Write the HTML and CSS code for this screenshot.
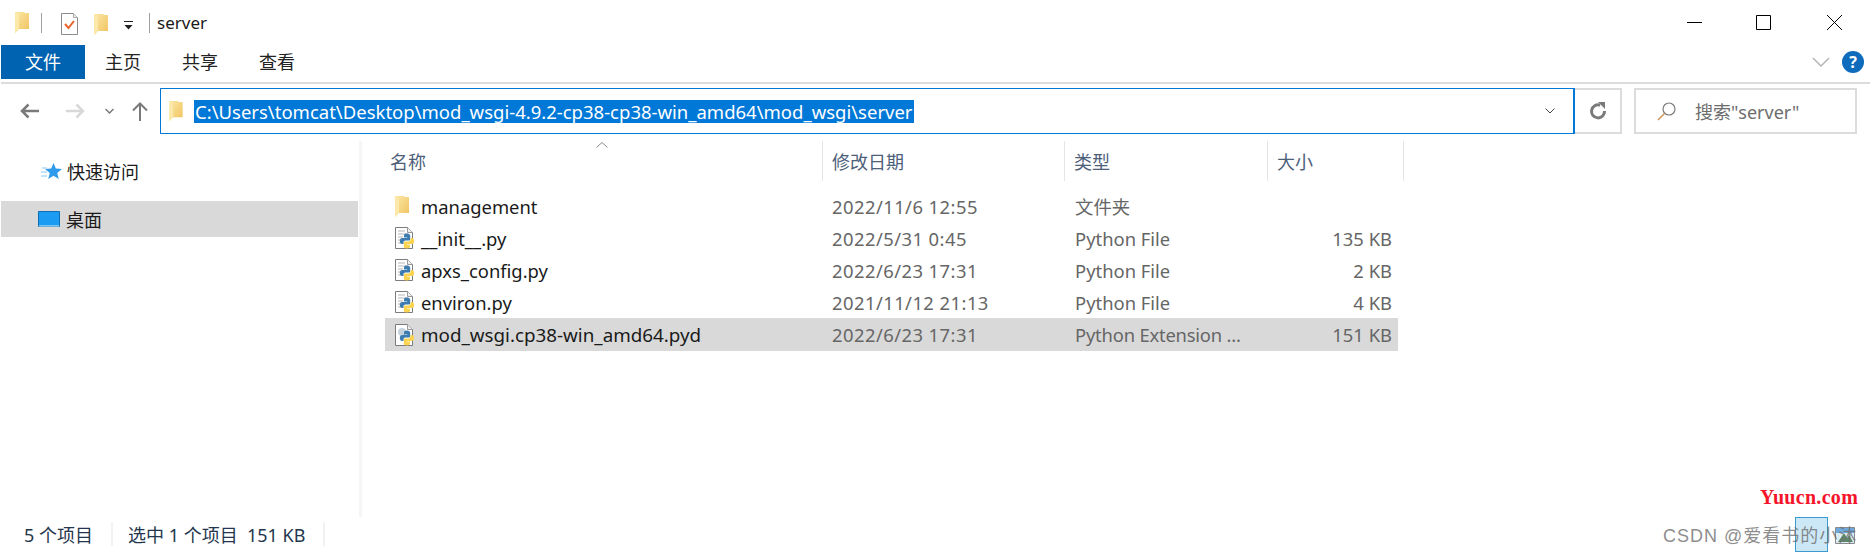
FILE: index.html
```html
<!DOCTYPE html>
<html lang="en">
<head>
    <meta charset="UTF-8">
    <title>server</title>
    <link rel="stylesheet" href="styles.css">
</head>
<body>
    <!-- Shared icons -->
    <svg class="defs" width="0" height="0">
        <defs>
            <linearGradient id="folder-fill" x1="0" y1="0" x2="1" y2="1">
                <stop offset="0" stop-color="#fbe8a8"/>
                <stop offset="1" stop-color="#f0c25c"/>
            </linearGradient>
            <symbol id="folder" viewBox="0 0 14 21">
                <path d="M0 0h9l1 1h4v16H4L0 21z" fill="url(#folder-fill)"/>
                <path d="M0 0l4 2v15L0 21z" fill="#fce9a9"/>
            </symbol>
            <symbol id="snake" viewBox="0 0 16 16">
                <path d="M8 .5C5.4.5 5 1.7 5 2.8v1.7h3.2V5H3.1C1.8 5 .8 6.2.8 8s1 3.1 2.3 3.1h1.4V9.4c0-1 .8-1.9 1.9-1.9h3.2c.9 0 1.6-.7 1.6-1.6V2.8C11.200 1.500 10.200.5 8 .5z" fill="#3d7cb0"/>
                <path d="M8 .5C5.4.5 5 1.700 5 2.800v1.700h3.200V5H3.100C1.800 5 .8 6.200.8 8s1 3.100 2.300 3.100h1.400V9.400c0-1 .8-1.900 1.900-1.900h3.200c.9 0 1.600-.7 1.600-1.600V2.800C11.200 1.500 10.200.5 8 .5z" fill="#fbd34e" transform="rotate(180 8 8)"/>
            </symbol>
            <symbol id="py-file" viewBox="0 0 20 22">
                <path d="M.5.5h12l5 5v16H.5z" fill="#fff" stroke="#7b7b7b"/>
                <path d="M12.500.5v5h5" fill="#eee" stroke="#9a9a9a"/>
                <path d="M3 4h7M3 7h10M3 10h5M3 13h3M3 16h3" stroke="#b5b5b5"/>
                <use href="#snake" x="4" y="6" width="16" height="16"/>
            </symbol>
            <symbol id="pyd-file" viewBox="0 0 20 22">
                <path d="M.5.5h12l5 5v16H.5z" fill="#fff" stroke="#7b7b7b"/>
                <path d="M12.500.5v5h5" fill="#eee" stroke="#9a9a9a"/>
                <circle cx="7" cy="8" r="4" fill="#c5d3dd"/>
                <use href="#snake" x="4" y="6" width="16" height="16"/>
            </symbol>
        </defs>
    </svg>

    <div class="window">
        <!-- Title bar -->
        <div class="titlebar">
            <svg class="qa-folder"><use href="#folder"/></svg>
            <span class="qa-sep"></span>
            <svg class="qa-note" viewBox="0 0 17 22">
                <path d="M.5.500h12l4 4v17H.5z" fill="#fff" stroke="#8c8c8c"/>
                <path d="M12.500.5v4h4" fill="#eee" stroke="#aaa"/>
                <path d="M4 11l3.500 4L13 8" fill="none" stroke="#e8622a" stroke-width="2"/>
            </svg>
            <svg class="qa-folder qa-folder-two"><use href="#folder"/></svg>
            <svg class="qa-drop" viewBox="0 0 9 9">
                <path d="M0 .5h9" stroke="#222"/>
                <path d="M.5 4h8L4.500 8.500z" fill="#222"/>
            </svg>
            <span class="qa-sep qa-sep-two"></span>
            <span class="title">server</span>
            <div class="win-controls">
                <svg class="win-min" width="15" height="15" viewBox="0 0 15 15"><path d="M0 7.500h15" stroke="#000"/></svg>
                <svg class="win-max" width="15" height="15" viewBox="0 0 15 15"><path d="M.5.500h14v14H.5z" fill="none" stroke="#000"/></svg>
                <svg width="15" height="15" viewBox="0 0 15 15"><path d="M0 0l15 15M15 0L0 15" stroke="#000"/></svg>
            </div>
        </div>

        <!-- Ribbon tabs -->
        <div class="tabs">
            <div class="tab-file"><span>文件</span></div>
            <div class="tab">主页</div>
            <div class="tab">共享</div>
            <div class="tab">查看</div>
            <div class="ribbon-right">
                <svg width="18" height="10" viewBox="0 0 18 10"><path d="M1 1l8 8 8-8" fill="none" stroke="#b5b5b5" stroke-width="1.500"/></svg>
                <div class="help">?</div>
            </div>
        </div>
        <div class="ribbon-line"></div>

        <!-- Address bar -->
        <div class="addressbar">
            <div class="nav">
                <svg class="nav-back" width="19" height="16" viewBox="0 0 19 16"><path d="M19 8H2M8.500 1.500L2 8l6.500 6.500" fill="none" stroke="#7a7a7a" stroke-width="2.500"/></svg>
                <svg class="nav-forward" width="19" height="16" viewBox="0 0 19 16"><path d="M0 8h17M10.500 1.500L17 8l-6.500 6.500" fill="none" stroke="#d8d8d8" stroke-width="2.500"/></svg>
                <svg class="nav-recent" width="9" height="6" viewBox="0 0 9 6"><path d="M.5 1l4 4 4-4" fill="none" stroke="#7a7a7a" stroke-width="1.500"/></svg>
                <svg class="nav-up" width="16" height="19" viewBox="0 0 16 19"><path d="M8 19V2M1 8.500L8 1.500l7 7" fill="none" stroke="#7a7a7a" stroke-width="2"/></svg>
            </div>
            <div class="address">
                <svg class="address-folder"><use href="#folder"/></svg>
                <span class="address-path">C:\Users\tomcat\Desktop\mod_wsgi-4.9.2-cp38-cp38-win_amd64\mod_wsgi\server</span>
                <svg class="address-drop" width="10" height="6" viewBox="0 0 10 6"><path d="M.5.500L5 5 9.500.5" fill="none" stroke="#444"/></svg>
            </div>
            <div class="refresh">
                <svg width="18" height="18" viewBox="0 0 18 18"><path d="M11 3.200A6.500 6.500 0 1 0 15.500 9" fill="none" stroke="#7a7a7a" stroke-width="3"/><path d="M9 0l7 0v7z" fill="#7a7a7a"/></svg>
            </div>
            <div class="search">
                <svg width="19" height="19" viewBox="0 0 19 19"><circle cx="12" cy="7" r="6" fill="none" stroke="#7a7a7a" stroke-width="1.200"/><path d="M7.500 11.500L1 18" stroke="#c9925a" stroke-width="1.400"/></svg>
                <span>搜索"server"</span>
            </div>
        </div>

        <div class="main">
            <!-- Navigation pane -->
            <div class="sidebar">
                <div class="side-item side-quick">
                    <svg class="side-star" width="21" height="18" viewBox="0 0 21 18">
                        <path d="M12.500 0l2.300 5.600 6.200.4-4.800 3.900 1.600 6.100-5.300-3.300L7.200 16l1.600-6.100L4 6l6.200-.4z" fill="#2f9bec"/>
                        <path d="M1 5h5M0 9h6M0 13h6" stroke="#8cc8f3"/>
                    </svg>
                    <span>快速访问</span>
                </div>
                <div class="side-item side-selected">
                    <svg class="side-desk" width="22" height="16" viewBox="0 0 22 16">
                        <path d="M.5.500h21v15H.5z" fill="#1b9cf2" stroke="#0f6fb5"/>
                        <path d="M1 15h20" stroke="#d5ecfb"/>
                    </svg>
                    <span>桌面</span>
                </div>
            </div>

            <!-- File list -->
            <div class="content">
                <div class="head">
                    <svg class="sort-arrow" width="12" height="6" viewBox="0 0 12 6"><path d="M.5 5.500L6 .5l5.500 5" fill="none" stroke="#8a8a8a"/></svg>
                    <div class="head-cell">名称</div>
                    <div class="head-cell">修改日期</div>
                    <div class="head-cell">类型</div>
                    <div class="head-cell">大小</div>
                </div>
                <div class="row">
                    <svg class="row-folder"><use href="#folder"/></svg>
                    <span class="name">management</span>
                    <span class="cell date">2022/11/6 12:55</span>
                    <span class="cell">文件夹</span>
                    <span class="cell size"></span>
                </div>
                <div class="row">
                    <svg class="row-file"><use href="#py-file"/></svg>
                    <span class="name">__init__.py</span>
                    <span class="cell date">2022/5/31 0:45</span>
                    <span class="cell">Python File</span>
                    <span class="cell size">135 KB</span>
                </div>
                <div class="row">
                    <svg class="row-file"><use href="#py-file"/></svg>
                    <span class="name">apxs_config.py</span>
                    <span class="cell date">2022/6/23 17:31</span>
                    <span class="cell">Python File</span>
                    <span class="cell size">2 KB</span>
                </div>
                <div class="row">
                    <svg class="row-file"><use href="#py-file"/></svg>
                    <span class="name">environ.py</span>
                    <span class="cell date">2021/11/12 21:13</span>
                    <span class="cell">Python File</span>
                    <span class="cell size">4 KB</span>
                </div>
                <div class="row row-selected">
                    <svg class="row-file"><use href="#pyd-file"/></svg>
                    <span class="name name-long">mod_wsgi.cp38-win_amd64.pyd</span>
                    <span class="cell date">2022/6/23 17:31</span>
                    <span class="cell type-long">Python Extension ...</span>
                    <span class="cell size">151 KB</span>
                </div>
            </div>
        </div>

        <!-- Status bar -->
        <div class="statusbar">
            <span>5 个项目</span>
            <span class="status-sep"></span>
            <span>选中 1 个项目&nbsp;&nbsp;151 KB</span>
            <span class="status-sep"></span>
        </div>
    </div>

    <!-- Watermarks over the screenshot -->
    <div class="mark-yuucn">Yuucn.com</div>
    <div class="mark-view"></div>
    <svg class="mark-picture" width="20" height="17" viewBox="0 0 20 17">
        <path d="M.5.500h19v16H.5z" fill="#dcecf7" stroke="#8a8a8a"/>
        <path d="M1 1h18v5H1z" fill="#6fa8dc"/>
        <path d="M3 15l6-9 3 5 2-3 4 7z" fill="#5f8a6a"/>
    </svg>
    <div class="mark-csdn">CSDN @爱看书的小沐</div>
</body>
</html>
```

FILE: styles.css
```css
/* Explorer window */
html, body {
    margin: 0;
    height: 100%;
    overflow: hidden;
    background: #fff;
}

body {
    position: relative;
    font-family: "Noto Sans", "Noto Sans CJK SC", sans-serif;
    font-size: 18px;
    color: #1a1a1a;
}

.defs {
    position: absolute;
}

.window {
    display: flex;
    flex-direction: column;
    height: 553px;
}

/* Title bar */
.titlebar {
    display: flex;
    align-items: center;
    height: 45px;
    padding: 0 28px 0 15px;
    box-sizing: border-box;
}

.qa-folder {
    width: 14px;
    height: 21px;
    margin-bottom: 1px;
}

.qa-folder-two {
    margin-left: 16px;
    margin-bottom: -3px;
}

.qa-sep {
    width: 1px;
    height: 20px;
    margin-left: 12px;
    background: #a0a0a0;
}

.qa-sep-two {
    margin-left: 16px;
}

.qa-note {
    width: 17px;
    height: 22px;
    margin-left: 19px;
    margin-bottom: -3px;
}

.qa-drop {
    width: 9px;
    height: 9px;
    margin-left: 16px;
    margin-bottom: -6px;
}

.title {
    margin-left: 7px;
    font-size: 17px;
    line-height: 1;
}

.win-controls {
    display: flex;
    margin-left: auto;
}

.win-min {
    margin-right: 54px;
}

.win-max {
    margin-right: 56px;
}

/* Ribbon */
.tabs {
    display: flex;
    align-items: center;
    height: 34px;
    padding: 0 6px 0 1px;
    line-height: 34px;
}

.tab-file {
    display: flex;
    align-items: center;
    justify-content: center;
    width: 84px;
    height: 34px;
    background: #0063b1;
    color: #fff;
    margin-right: 20px;
}

.tab {
    width: 36px;
    height: 34px;
    margin-right: 41px;
    white-space: nowrap;
    color: #222;
}

.ribbon-right {
    display: flex;
    align-items: center;
    gap: 12px;
    margin-left: auto;
}

.help {
    width: 22px;
    height: 22px;
    border-radius: 50%;
    background: #0f6cbd;
    color: #fff;
    font-weight: 700;
    font-size: 16px;
    line-height: 22px;
    text-align: center;
}

.ribbon-line {
    height: 2px;
    margin: 3px 0 0 1px;
    background: #dcdcdc;
}

/* Address bar */
.addressbar {
    display: flex;
    height: 46px;
    margin-top: 4px;
}

.nav {
    display: flex;
    align-items: center;
    width: 160px;
    padding-left: 20px;
    box-sizing: border-box;
}

.nav-forward {
    margin-left: 27px;
}

.nav-recent {
    margin-left: 20px;
}

.nav-up {
    margin-left: 18px;
}

.address {
    display: flex;
    align-items: center;
    width: 1415px;
    box-sizing: border-box;
    border: 1px solid #0078d7;
    border-right-width: 2px;
    padding: 0 18px 0 8px;
}

.address-folder {
    width: 14px;
    height: 20px;
}

.address-path {
    margin-left: 11px;
    padding: 0 1px;
    background: #0078d7;
    color: #fff;
    font-size: 18.5px;
    line-height: 23px;
    white-space: nowrap;
}

.address-drop {
    margin-left: auto;
}

.refresh {
    display: flex;
    align-items: center;
    justify-content: center;
    width: 47px;
    box-sizing: border-box;
    border: 2px solid #dcdcdc;
    border-left: none;
}

.search {
    display: flex;
    align-items: center;
    gap: 19px;
    width: 223px;
    margin-left: 12px;
    padding-left: 21px;
    box-sizing: border-box;
    border: 2px solid #dcdcdc;
    color: #6d6d6d;
}

/* Main area */
.main {
    display: flex;
    height: 383px;
    padding-top: 7px;
    box-sizing: border-box;
}

.sidebar {
    width: 362px;
    padding: 13px 0 0 1px;
    box-sizing: border-box;
    border-right: 3px solid #f6f6f6;
    margin-right: 19px;
    flex-shrink: 0;
}

.side-item {
    display: flex;
    align-items: center;
    height: 36px;
    margin-bottom: 11px;
    white-space: nowrap;
}

.side-quick {
    line-height: 34px;
}

.side-star {
    margin-left: 40px;
    margin-right: 5px;
}

.side-desk {
    margin-left: 37px;
    margin-right: 6px;
}

.side-selected {
    background: #d9d9d9;
    margin-right: 1px;
}

.content {
    flex: 1;
}

.head {
    position: relative;
    display: grid;
    grid-template-columns: 442px 242px 203px 136px;
    width: 1023px;
    height: 40px;
    margin-bottom: 9px;
    color: #4c607a;
}

.head-cell {
    display: flex;
    align-items: center;
    padding-left: 9px;
    border-right: 1px solid #e5e5e5;
}

.sort-arrow {
    position: absolute;
    left: 215px;
    top: 1px;
}

.row {
    display: grid;
    grid-template-columns: 36px 411px 243px 203px 120px;
    align-items: center;
    width: 1013px;
    height: 32px;
    margin-left: 4px;
    white-space: nowrap;
    font-size: 18.4px;
}

.row-selected {
    height: 33px;
    background: #d9d9d9;
}

.row-folder {
    width: 14px;
    height: 21px;
    margin-left: 10px;
}

.row-file {
    width: 20px;
    height: 22px;
    margin-left: 10px;
}

.name {
    color: #1a1a1a;
}

.name-long {
    font-size: 18.8px;
}

.cell {
    color: #666;
}

.date {
    letter-spacing: .45px;
}

.type-long {
    letter-spacing: -.2px;
}

.size {
    padding-right: 6px;
    text-align: right;
}

/* Status bar */
.statusbar {
    display: flex;
    align-items: center;
    height: 36px;
    padding-left: 24px;
    padding-bottom: 2px;
    box-sizing: border-box;
    color: #24364d;
}

.status-sep {
    width: 2px;
    height: 24px;
    background: #f2f2f2;
    margin: 0 15px 0 18px;
}

/* Watermarks */
.mark-yuucn {
    position: absolute;
    left: 1760px;
    top: 486px;
    font-family: "Liberation Serif", serif;
    font-size: 20px;
    font-weight: 700;
    letter-spacing: .3px;
    color: #f5142a;
}

.mark-view {
    position: absolute;
    left: 1795px;
    top: 517px;
    width: 33px;
    height: 35px;
    box-sizing: border-box;
    border: 1px solid #3b9bd0;
    background: #cce8f6;
}

.mark-picture {
    position: absolute;
    left: 1835px;
    top: 527px;
}

.mark-csdn {
    position: absolute;
    left: 1663px;
    top: 521px;
    font-family: "Liberation Sans", "Noto Sans CJK SC", sans-serif;
    font-size: 18px;
    letter-spacing: 1px;
    color: rgba(110, 110, 110, .8);
    white-space: nowrap;
}
```
